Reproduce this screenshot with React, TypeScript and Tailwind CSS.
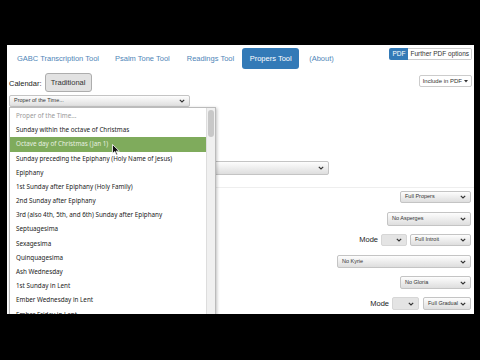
function Chevron() {
  return (
    <svg width="6" height="4" viewBox="0 0 6 4" className="shrink-0">
      <path d="M0.8 0.8 L3 3 L5.2 0.8" fill="none" stroke="#333" strokeWidth="1.2" />
    </svg>
  )
}

function Sel({ label, className, disabled }: { label?: string; className?: string; disabled?: boolean }) {
  return (
    <div
      className={[
        'flex items-center justify-between rounded-[2px] border px-[4px] text-[5.5px] leading-none',
        disabled
          ? 'border-[#d6d6d6] bg-[#e4e4e4] text-[#aaa]'
          : 'border-[#c4c4c4] bg-linear-to-b from-[#fdfdfd] to-[#dedede] text-[#333]',
        className ?? '',
      ].join(' ')}
    >
      <span>{label}</span>
      <Chevron />
    </div>
  )
}

const items = [
  'Proper of the Time...',
  'Sunday within the octave of Christmas',
  'Octave day of Christmas (Jan 1)',
  'Sunday preceding the Epiphany (Holy Name of Jesus)',
  'Epiphany',
  '1st Sunday after Epiphany (Holy Family)',
  '2nd Sunday after Epiphany',
  '3rd (also 4th, 5th, and 6th) Sunday after Epiphany',
  'Septuagesima',
  'Sexagesima',
  'Quinquagesima',
  'Ash Wednesday',
  '1st Sunday in Lent',
  'Ember Wednesday in Lent',
  'Ember Friday in Lent',
]

export default function App() {
  return (
    <div className="h-[360px] w-[480px] overflow-hidden bg-black pl-[7px] pt-[45px] font-['Liberation_Sans',sans-serif]">
      <div className="relative h-[269px] w-[467px] overflow-hidden bg-white">
        {/* Nav */}
        <div className="flex h-[21px] items-start pt-[3px]">
          <div className="flex h-[21px] items-center text-[7.5px] text-[#4f86b8]">
            <span className="ml-[10px]">GABC Transcription Tool</span>
            <span className="ml-[16px]">Psalm Tone Tool</span>
            <span className="ml-[17px]">Readings Tool</span>
            <span className="ml-[8px] flex h-[21px] w-[57px] items-center justify-center rounded-[3px] bg-[#337ab7] text-white">
              Propers Tool
            </span>
            <span className="ml-[10px]">(About)</span>
          </div>
          <div className="ml-auto mr-[2px] flex h-[12px] text-[6.5px]">
            <span className="flex items-center rounded-l-[2px] bg-[#337ab7] px-[3px] text-white">PDF</span>
            <span className="flex items-center rounded-r-[2px] border border-l-0 border-[#ccc] px-[2px] text-[#333]">
              Further PDF options
            </span>
          </div>
        </div>

        {/* Calendar row */}
        <div className="mt-[7px] flex items-start">
          <span className="ml-[2px] mt-[5px] text-[7.5px] text-[#222]">Calendar:</span>
          <span className="ml-[3px] flex h-[19px] w-[47px] items-center justify-center rounded-[3px] border border-[#adadad] bg-[#e2e2e2] text-[7.5px] text-[#333]">
            Traditional
          </span>
          <span className="ml-auto mr-[2px] mt-[2px] flex h-[12px] items-center gap-[2px] rounded-[2px] border border-[#ccc] px-[3px] text-[6px] text-[#333]">
            Include in PDF
            <svg width="4" height="3" viewBox="0 0 4 3">
              <path d="M0 0 L4 0 L2 2.5 Z" fill="#333" />
            </svg>
          </span>
        </div>

        <Sel label="Proper of the Time..." className="ml-[2px] mt-[3px] h-[12px] w-[181px]" />

        {/* Hidden select behind list */}
        <Sel className="ml-[2px] mt-[54px] h-[14px] w-[320px]" />

        <div className="ml-[209px] mt-[12px] h-px bg-[#eee]" />

        {/* Right side controls */}
        <div className="mr-[3px] flex flex-col items-end">
          <Sel label="Full Propers" className="mt-[3px] h-[12px] w-[71px]" />
          <Sel label="No Asperges" className="mt-[9px] h-[14px] w-[84px]" />
          <div className="mt-[8px] flex h-[12px] items-center">
            <span className="mr-[3px] text-[7.5px] text-[#222]">Mode</span>
            <Sel disabled className="h-[12px] w-[26px]" />
            <Sel label="Full Introit" className="ml-[3px] h-[12px] w-[61px]" />
          </div>
          <Sel label="No Kyrie" className="mt-[9px] h-[13px] w-[134px]" />
          <Sel label="No Gloria" className="mt-[8px] h-[13px] w-[71px]" />
          <div className="mt-[8px] flex h-[13px] items-center">
            <span className="mr-[3px] text-[7.5px] text-[#222]">Mode</span>
            <Sel disabled className="h-[13px] w-[27px]" />
            <Sel label="Full Gradual" className="ml-[4px] h-[13px] w-[48px]" />
          </div>
        </div>

        {/* Open dropdown list */}
        <div className="absolute left-[2px] top-[62px] flex h-[220px] w-[207px] border border-[#bbb] bg-white shadow-[1px_1px_3px_rgba(0,0,0,0.25)] font-['Noto_Sans',sans-serif]">
          <div className="flex-1 pt-[1px]">
            {items.map((it, i) => (
              <div
                key={it}
                className={[
                  'flex h-[14.2px] items-center pl-[6px] text-[6.3px] leading-none',
                  i === 0 ? 'text-[#999]' : i === 2 ? 'bg-[#7fab5c] text-[#e8f0e0]' : 'text-[#222]',
                ].join(' ')}
              >
                {it}
              </div>
            ))}
          </div>
          <div className="w-[9px] border-l border-[#ddd] bg-[#f0f0f0] pt-[2px]">
            <div className="mx-auto h-[27px] w-[6px] rounded-[3px] bg-[#c8c8c8]" />
          </div>
        </div>

        {/* Mouse cursor */}
        <svg className="absolute left-[105px] top-[99px]" width="8" height="12" viewBox="0 0 8 12">
          <path d="M0.5 0.5 L0.5 9.5 L2.8 7.5 L4.3 11 L5.6 10.4 L4.2 7.1 L7.3 7.1 Z" fill="#111" stroke="#fff" strokeWidth="0.8" />
        </svg>
      </div>
    </div>
  )
}
